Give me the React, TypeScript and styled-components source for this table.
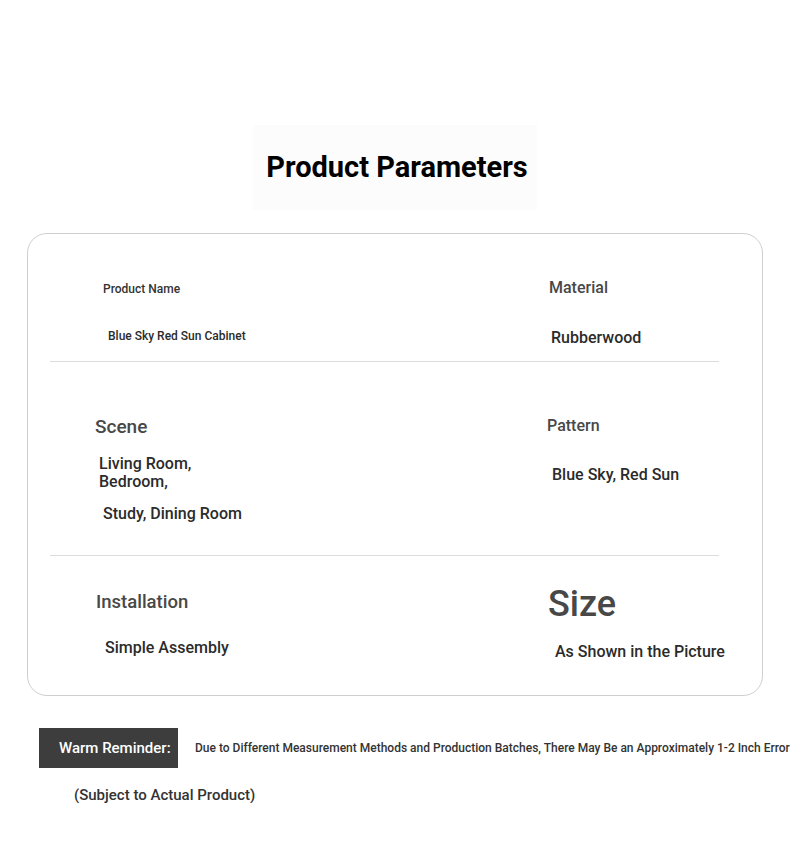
import React from "react";
import styled, { createGlobalStyle } from "styled-components";

const Global = createGlobalStyle`
  html, body { margin: 0; padding: 0; background: #fff; }
  body { font-family: Roboto, "Liberation Sans", Arial, sans-serif; overflow-x: hidden; }
`;

const Page = styled.div`
  width: 790px;
  padding-top: 125px;
  padding-bottom: 40px;
  display: flex;
  flex-direction: column;
  overflow: hidden;
`;

const TitleBox = styled.div`
  align-self: center;
  width: 284px;
  height: 85px;
  background: #fcfcfc;
  display: flex;
  align-items: center;
  justify-content: center;
`;

const Title = styled.h1`
  margin: 0 0 0 4px;
  font-size: 29px;
  line-height: 1;
  font-weight: 700;
  color: #000;
`;

const Card = styled.section`
  margin: 23px 0 0 27px;
  width: 736px;
  box-sizing: border-box;
  border: 1px solid #cfcfcf;
  border-radius: 20px;
`;

const Row = styled.div<{ $pb: number }>`
  display: grid;
  grid-template-columns: 452px 1fr;
  align-items: start;
  padding-left: 60px;
  padding-bottom: ${(p) => p.$pb}px;
`;

const Cell = styled.div<{ $pt: number }>`
  display: flex;
  flex-direction: column;
  align-items: flex-start;
  padding-top: ${(p) => p.$pt}px;
`;

const Label = styled.div<{ $size: number; $indent: number; $dark?: boolean }>`
  font-size: ${(p) => p.$size}px;
  line-height: ${(p) => Math.round(p.$size * 1.2)}px;
  font-weight: 500;
  color: ${(p) => (p.$dark ? "#333" : "#484848")};
  margin-left: ${(p) => p.$indent}px;
`;

const Value = styled.div<{ $size?: number; $indent: number; $gap: number; $lh?: number }>`
  font-size: ${(p) => p.$size ?? 16}px;
  line-height: ${(p) => p.$lh ?? Math.round((p.$size ?? 16) * 1.25)}px;
  font-weight: 500;
  color: #2b2b2b;
  margin-left: ${(p) => p.$indent}px;
  margin-top: ${(p) => p.$gap}px;
`;

const Divider = styled.hr`
  border: none;
  height: 1px;
  background: #dcdcdc;
  margin: 0 43px 0 22px;
`;

const Reminder = styled.div`
  display: flex;
  align-items: center;
  margin-top: 32px;
  padding-left: 39px;
`;

const Badge = styled.div`
  flex: none;
  width: 139px;
  height: 40px;
  box-sizing: border-box;
  padding-left: 20px;
  display: flex;
  align-items: center;
  background: #3d3d3d;
  color: #fff;
  font-size: 15px;
  font-weight: 500;
`;

const Note = styled.div`
  margin-left: 17px;
  font-size: 12px;
  font-weight: 500;
  color: #333;
  white-space: nowrap;
`;

const Subject = styled.div`
  margin: 17px 0 0 74px;
  font-size: 15px;
  line-height: 20px;
  font-weight: 500;
  color: #333;
`;

export default function App() {
  return (
    <>
      <Global />
      <Page>
        <TitleBox>
          <Title>Product Parameters</Title>
        </TitleBox>
        <Card>
          <Row $pb={13}>
            <Cell $pt={48}>
              <Label $size={12} $indent={15} $dark>Product Name</Label>
              <Value $size={12} $lh={16} $indent={20} $gap={32}>Blue Sky Red Sun Cabinet</Value>
            </Cell>
            <Cell $pt={44}>
              <Label $size={16} $indent={9}>Material</Label>
              <Value $indent={11} $gap={31}>Rubberwood</Value>
            </Cell>
          </Row>
          <Divider />
          <Row $pb={31}>
            <Cell $pt={53}>
              <Label $size={19} $indent={7}>Scene</Label>
              <Value $indent={11} $gap={17} $lh={18}>
                Living Room,
                <br />
                Bedroom,
              </Value>
              <Value $indent={15} $gap={13}>Study, Dining Room</Value>
            </Cell>
            <Cell $pt={54}>
              <Label $size={16} $indent={7}>Pattern</Label>
              <Value $indent={12} $gap={30}>Blue Sky, Red Sun</Value>
            </Cell>
          </Row>
          <Divider />
          <Row $pb={33}>
            <Cell $pt={35}>
              <Label $size={18.5} $indent={8}>Installation</Label>
              <Value $indent={17} $gap={25}>Simple Assembly</Value>
            </Cell>
            <Cell $pt={27}>
              <Label $size={36} $indent={8}>Size</Label>
              <Value $indent={15} $gap={16}>As Shown in the Picture</Value>
            </Cell>
          </Row>
        </Card>
        <Reminder>
          <Badge>Warm Reminder:</Badge>
          <Note>
            Due to Different Measurement Methods and Production Batches, There May Be an Approximately 1-2 Inch Error
          </Note>
        </Reminder>
        <Subject>(Subject to Actual Product)</Subject>
      </Page>
    </>
  );
}
